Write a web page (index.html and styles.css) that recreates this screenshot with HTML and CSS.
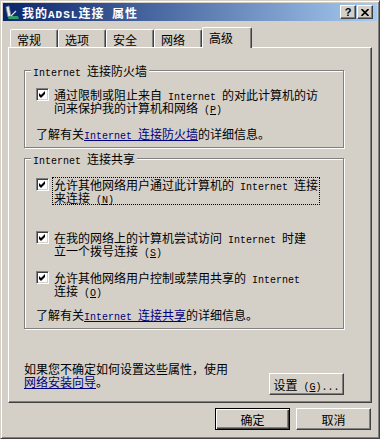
FILE: index.html
```html
<!DOCTYPE html>
<html lang="zh-CN">
<head>
  <meta charset="UTF-8" />
  <title>我的ADSL连接 属性</title>
  <link rel="stylesheet" href="styles.css">
</head>
<body>

  <div class="window">
    <div class="titlebar">
      <svg class="app-icon" width="16" height="16" viewBox="0 0 16 16">
        <path d="M2 3 L5 2 L7 12 L4 13 Z" fill="#e8e8e8" stroke="#7a8a9a" stroke-width="0.8"/>
        <path d="M5 12 L14 12 L15 15 L4 15 Z" fill="#2f9a6a"/>
        <path d="M7 12 L12 7" stroke="#d0d8e0" stroke-width="1.2"/>
      </svg>
      <span class="title">我的<span class="en">ADSL</span>连接<span class="en"> </span>属性</span>
      <div class="caption-buttons">
        <button class="cap-btn help">?</button>
        <button class="cap-btn">
          <svg width="8" height="7" viewBox="0 0 8 7"><path d="M0.5 0 L7.5 7 M7.5 0 L0.5 7" stroke="#000" stroke-width="1.6"/></svg>
        </button>
      </div>
    </div>

    <div class="content">
      <div class="tabs">
        <div class="tab">常规</div>
        <div class="tab">选项</div>
        <div class="tab">安全</div>
        <div class="tab">网络</div>
        <div class="tab active">高级</div>
      </div>

      <div class="panel">
        <div class="group">
          <div class="group-title"><span><span class="en">Internet </span>连接防火墙</span></div>
          <div class="check-row">
            <span class="check"><svg width="11" height="11" viewBox="0 0 11 11"><polygon points="2,4 4,6 8,2 8,5 4,9 2,7" fill="#000"/></svg></span>
            <span class="label">通过限制或阻止来自<span class="en"> Internet </span>的对此计算机的访<br>问来保护我的计算机和网络<span class="en"> (<u>P</u>)</span></span>
          </div>
          <div class="info">了解有关<a href="#"><span class="en">Internet </span>连接防火墙</a>的详细信息。</div>
        </div>

        <div class="group second">
          <div class="group-title"><span><span class="en">Internet </span>连接共享</span></div>
          <div class="check-row">
            <span class="check"><svg width="11" height="11" viewBox="0 0 11 11"><polygon points="2,4 4,6 8,2 8,5 4,9 2,7" fill="#000"/></svg></span>
            <span class="label focus">允许其他网络用户通过此计算机的<span class="en"> Internet </span>连接<br>来连接<span class="en"> (<u>N</u>)</span></span>
          </div>
          <div class="check-row dial">
            <span class="check"><svg width="11" height="11" viewBox="0 0 11 11"><polygon points="2,4 4,6 8,2 8,5 4,9 2,7" fill="#000"/></svg></span>
            <span class="label">在我的网络上的计算机尝试访问<span class="en"> Internet </span>时建<br>立一个拨号连接<span class="en"> (<u>S</u>)</span></span>
          </div>
          <div class="check-row">
            <span class="check"><svg width="11" height="11" viewBox="0 0 11 11"><polygon points="2,4 4,6 8,2 8,5 4,9 2,7" fill="#000"/></svg></span>
            <span class="label">允许其他网络用户控制或禁用共享的<span class="en"> Internet</span><br>连接<span class="en"> (<u>O</u>)</span></span>
          </div>
          <div class="info last">了解有关<a href="#"><span class="en">Internet </span>连接共享</a>的详细信息。</div>
        </div>

        <div class="setup-row">
          <div class="setup-text">如果您不确定如何设置这些属性，使用<br><a href="#">网络安装向导</a>。</div>
          <button class="btn setup">设置<span class="en"> (<u>G</u>)...</span></button>
        </div>
      </div>

      <div class="dialog-buttons">
        <button class="btn default">确定</button>
        <button class="btn">取消</button>
      </div>
    </div>
  </div>

</body>
</html>
```

FILE: styles.css
```css
body {
  margin: 0;
  font-family: "Noto Sans CJK SC", sans-serif;
  font-size: 12px;
  line-height: 13px;
  color: #000;
  background: #d4d0c8;
}
.en {
  font-family: "Liberation Mono", monospace;
  font-size: 10px;
  line-height: 0;
}
a {
  color: #000080;
  text-decoration: underline;
}
button {
  font: inherit;
  line-height: 13px;
  color: #000;
  cursor: default;
}

/* window frame */
.window {
  width: 380px;
  height: 439px;
  box-sizing: border-box;
  overflow: hidden;
  border: 1px solid;
  border-color: #d4d0c8 #404040 #404040 #d4d0c8;
  box-shadow: inset 1px 1px #fff, inset -1px -1px #808080;
  padding: 2px;
  background: #d4d0c8;
}
.titlebar {
  height: 18px;
  display: flex;
  align-items: center;
  padding: 0 4px 0 1px;
  background: linear-gradient(to right, #0a246a, #a6caf0);
}
.app-icon {
  flex: none;
}
.title {
  margin-left: 2px;
  color: #fff;
  font-weight: bold;
  letter-spacing: 1px;
  flex: 1;
}
.title .en {
  font-size: 11px;
}
.caption-buttons {
  display: flex;
  gap: 1px;
}
.cap-btn {
  width: 16px;
  height: 14px;
  box-sizing: border-box;
  padding: 0;
  border: 1px solid;
  border-color: #fff #404040 #404040 #fff;
  box-shadow: inset -1px -1px #808080;
  background: #d4d0c8;
  display: flex;
  align-items: center;
  justify-content: center;
}
.cap-btn.help {
  font-family: "Liberation Sans", sans-serif;
  font-weight: bold;
  font-size: 11px;
  line-height: 10px;
}

.content {
  padding: 0 5px;
}

/* tabs */
.tabs {
  display: flex;
  align-items: flex-end;
  height: 20px;
  margin-top: 6px;
  padding-left: 2px;
}
.tab {
  width: 48px;
  height: 18px;
  box-sizing: border-box;
  border-top: 1px solid #fff;
  border-left: 1px solid #fff;
  border-right: 1px solid #404040;
  border-radius: 2px 2px 0 0;
  box-shadow: inset -1px 0 #808080;
  padding: 3px 0 0 6px;
  background: #d4d0c8;
}
.tab.active {
  width: 50px;
  height: 21px;
  margin-bottom: -1px;
  position: relative;
  z-index: 1;
}

.panel {
  border: 1px solid;
  border-color: #fff #404040 #404040 #fff;
  box-shadow: inset -1px -1px #808080;
  padding: 0 27px 7px 15px;
}

/* group boxes */
.group {
  margin-top: 22px;
  border: 1px solid #808080;
  box-shadow: inset 1px 1px #fff, 1px 1px #fff;
  padding: 0 10px 7px 11px;
}
.group.second {
  margin-top: 10px;
}
.group-title {
  height: 13px;
  margin: -7px 0 0 -5px;
}
.group-title > span {
  background: #d4d0c8;
  padding: 0 2px;
}
.check-row {
  display: flex;
  align-items: flex-start;
  gap: 3px;
  margin-top: 10px;
}
.second .check-row {
  margin-top: 12px;
}
.second .check-row.dial {
  margin-top: 25px;
}
.check {
  flex: none;
  width: 13px;
  height: 13px;
  box-sizing: border-box;
  margin-top: 1px;
  border: 1px solid;
  border-color: #808080 #fff #fff #808080;
  box-shadow: inset 1px 1px #404040, inset -1px -1px #d4d0c8;
  background: #fff;
}
.check svg {
  display: block;
}
.label {
  border: 1px dotted transparent;
  padding: 0 1px;
}
.label.focus {
  border-color: #000;
}
.info {
  margin-top: 12px;
}
.info.last {
  margin-top: 10px;
}

.setup-row {
  display: flex;
  justify-content: space-between;
  align-items: flex-start;
  margin-top: 33px;
}

/* push buttons */
.btn {
  width: 75px;
  height: 22px;
  box-sizing: border-box;
  padding: 0;
  border: 1px solid;
  border-color: #fff #404040 #404040 #fff;
  box-shadow: inset -1px -1px #808080;
  background: #d4d0c8;
}
.btn.setup {
  margin-top: 11px;
}
.btn.default {
  border-color: #000;
  box-shadow: inset 1px 1px #fff, inset -1px -1px #404040, inset -2px -2px #808080;
}
.dialog-buttons {
  display: flex;
  justify-content: flex-end;
  gap: 6px;
  margin-top: 5px;
  padding-right: 1px;
}
```
